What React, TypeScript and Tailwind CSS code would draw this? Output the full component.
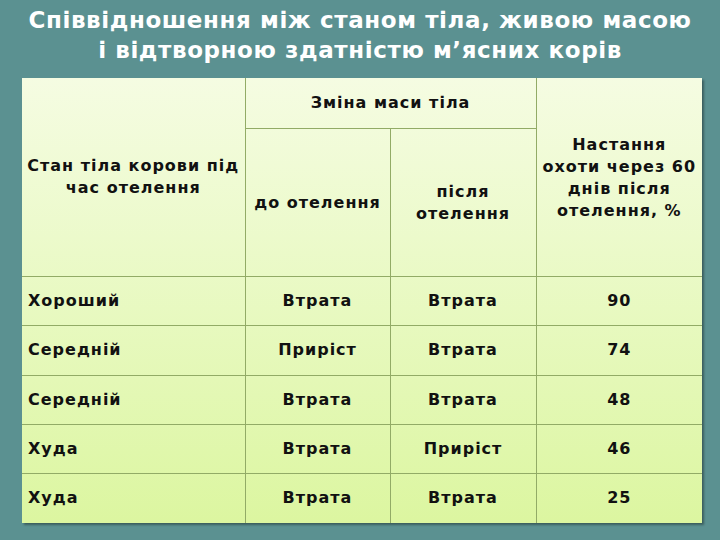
const rows: [string, string, string, string][] = [
  ["Хороший", "Втрата", "Втрата", "90"],
  ["Середній", "Приріст", "Втрата", "74"],
  ["Середній", "Втрата", "Втрата", "48"],
  ["Худа", "Втрата", "Приріст", "46"],
  ["Худа", "Втрата", "Втрата", "25"],
];

const rowHeights = ["h-[49px]", "h-[50px]", "h-[49px]", "h-[49px]", "h-[50px]"];

export default function App() {
  return (
    <div
      className="w-[720px] h-[540px] bg-[#5b9191] overflow-hidden"
      style={{ fontFamily: '"DejaVu Sans", Verdana, sans-serif' }}
    >
      <h1 className="pt-[5px] text-center text-white font-bold text-[23px] leading-[30px] tracking-[0.6px]">
        Співвідношення між станом тіла, живою масою
        <br />
        і відтворною здатністю м’ясних корів
      </h1>
      <div className="mt-[13px] ml-[22px] w-[680px] shadow-[2px_2px_2px_rgba(0,0,0,0.35)]">
        <table className="w-[680px] table-fixed border-collapse bg-gradient-to-b from-[#f5fce2] to-[#dcf6a0] text-[16px] font-bold text-[#111] leading-[22px] tracking-[1px]">
          <colgroup>
            <col className="w-[223px]" />
            <col className="w-[145px]" />
            <col className="w-[146px]" />
            <col className="w-[166px]" />
          </colgroup>
          <tbody>
            <tr className="h-[50px]">
              <td rowSpan={2} className="border-r border-b border-[#92ab66] text-center align-middle px-0">
                Стан тіла корови під
                <br />
                час отелення
              </td>
              <td colSpan={2} className="border-r border-b border-[#92ab66] text-center align-middle">
                Зміна маси тіла
              </td>
              <td rowSpan={2} className="border-b border-[#92ab66] text-center align-middle px-0 pt-[2px]">
                Настання
                <br />
                охоти через 60
                <br />
                днів після
                <br />
                отелення, %
              </td>
            </tr>
            <tr className="h-[148px]">
              <td className="border-r border-b border-[#92ab66] text-center align-middle pt-[2px]">до отелення</td>
              <td className="border-r border-b border-[#92ab66] text-center align-middle px-4 pt-[2px]">після отелення</td>
            </tr>
            {rows.map((r, i) => (
              <tr key={i} className={rowHeights[i]}>
                <td className={`pl-[6px] text-left align-middle border-r border-[#92ab66] ${i < rows.length - 1 ? "border-b" : ""}`}>
                  {r[0]}
                </td>
                <td className={`text-center align-middle border-r border-[#92ab66] ${i < rows.length - 1 ? "border-b" : ""}`}>
                  {r[1]}
                </td>
                <td className={`text-center align-middle border-r border-[#92ab66] ${i < rows.length - 1 ? "border-b" : ""}`}>
                  {r[2]}
                </td>
                <td className={`text-center align-middle border-[#92ab66] ${i < rows.length - 1 ? "border-b" : ""}`}>
                  {r[3]}
                </td>
              </tr>
            ))}
          </tbody>
        </table>
      </div>
    </div>
  );
}
